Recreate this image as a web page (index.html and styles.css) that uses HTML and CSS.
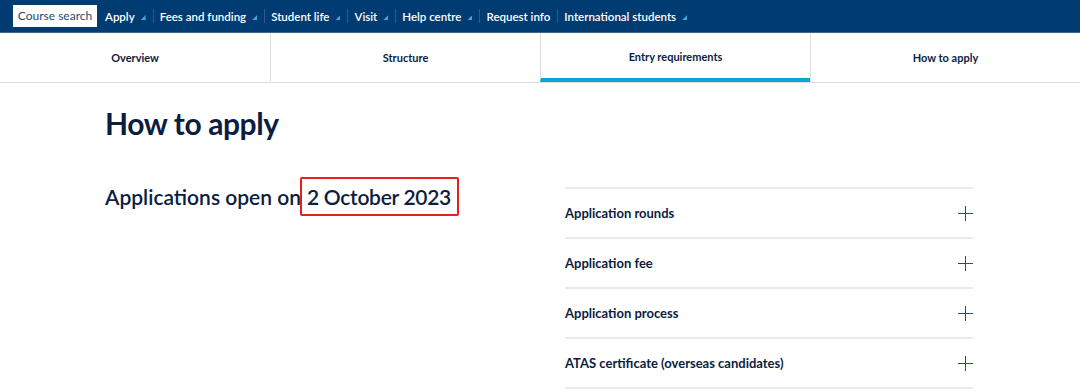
FILE: index.html
```html
<!DOCTYPE html>
<html lang="en">
<head>
<meta charset="utf-8">
<title>How to apply</title>
<link rel="stylesheet" href="styles.css">
</head>
<body>
<header class="topbar">
  <a class="search-btn" href="#">Course search</a>
  <nav class="topnav">
    <a class="item" href="#">Apply<span class="tri"></span></a>
    <span class="sep"></span>
    <a class="item" href="#">Fees and funding<span class="tri"></span></a>
    <span class="sep"></span>
    <a class="item" href="#">Student life<span class="tri"></span></a>
    <span class="sep"></span>
    <a class="item" href="#">Visit<span class="tri"></span></a>
    <span class="sep"></span>
    <a class="item" href="#">Help centre<span class="tri"></span></a>
    <span class="sep"></span>
    <a class="item" href="#">Request info</a>
    <span class="sep"></span>
    <a class="item" href="#">International students<span class="tri"></span></a>
  </nav>
</header>
<nav class="tabs">
  <a class="tab" href="#">Overview</a>
  <a class="tab" href="#">Structure</a>
  <a class="tab active" href="#">Entry requirements</a>
  <a class="tab" href="#">How to apply</a>
</nav>
<main class="content">
  <h1 class="title">How to apply</h1>
  <div class="cols">
    <div class="left">
      <h2 class="open">Applications open on<span class="date">2 October 2023</span></h2>
    </div>
    <div class="accordion">
      <div class="acc-row"><span>Application rounds</span><span class="plus"></span></div>
      <div class="acc-row"><span>Application fee</span><span class="plus"></span></div>
      <div class="acc-row"><span>Application process</span><span class="plus"></span></div>
      <div class="acc-row"><span>ATAS certificate (overseas candidates)</span><span class="plus"></span></div>
    </div>
  </div>
</main>
</body>
</html>
```
FILE: styles.css
```css
* { box-sizing: border-box; }
html, body { margin: 0; padding: 0; background: #fff; }
body {
  font-family: Lato, "Open Sans", Arial, sans-serif;
  color: #0c1d3f;
  overflow: hidden;
}
a { text-decoration: none; color: inherit; }

.topbar {
  background: #003c71;
  height: 33px;
  display: flex;
  align-items: center;
  padding-left: 13px;
  border-bottom: 1px solid #3c6590;
}
.search-btn {
  background: #fff;
  color: #2b4a6f;
  font-size: 12px;
  height: 22px;
  line-height: 22px;
  margin-right: 8px;
  width: 84px;
  text-align: center;
  white-space: nowrap;
}
.topnav {
  display: flex;
  align-items: center;
}
.item {
  color: #fff;
  font-size: 11.5px;
  font-weight: 600;
  display: flex;
  align-items: center;
  white-space: nowrap;
}
.tri {
  display: inline-block;
  width: 5px;
  height: 5px;
  margin-left: 6px;
  margin-top: 3px;
  background: #3ea6dd;
  clip-path: polygon(100% 0, 100% 100%, 0 100%);
}
.sep {
  width: 1px;
  height: 14px;
  background: #2b5a8a;
  margin: 0 6px 0 7px;
}

.tabs {
  display: grid;
  grid-template-columns: repeat(4, 1fr);
  height: 50px;
  border-bottom: 1px solid #dcdde2;
}
.tab {
  display: flex;
  align-items: center;
  justify-content: center;
  font-size: 11px;
  font-weight: 700;
  color: #0c1d3f;
  border-left: 1px solid #dcdde2;
  padding-bottom: 1px;
}
.tab:first-child { border-left: none; }
.tab.active {
  border-bottom: 4px solid #0aa5d2;
  padding-top: 3px;
}

.content {
  padding: 0 107px 0 105px;
}
.title {
  margin: 0;
  padding-top: 21px;
  font-size: 30px;
  font-weight: 700;
  line-height: 38px;
  letter-spacing: -0.4px;
}
.cols {
  display: grid;
  grid-template-columns: 460px 408px;
  margin-top: 44px;
}
.open {
  margin: 0;
  margin-top: -9px;
  font-size: 21px;
  font-weight: 600;
  line-height: 38px;
  display: flex;
  align-items: center;
  letter-spacing: 0;
}
.date {
  border: 2px solid #e3211d;
  border-radius: 2px;
  padding: 0 6px 0 5px;
  height: 39px;
  line-height: 35px;
  margin-left: -1px;
  letter-spacing: -0.3px;
}
.accordion {
  border-top: 2px solid #e8e9ec;
  margin-top: 1px;
}
.acc-row {
  height: 50px;
  border-bottom: 2px solid #e8e9ec;
  display: flex;
  align-items: center;
  justify-content: space-between;
  font-size: 13px;
  font-weight: 700;
  padding-right: 0;
}
.plus {
  width: 15px;
  height: 15px;
  position: relative;
}
.plus::before, .plus::after {
  content: "";
  position: absolute;
  background: #2f4a6b;
}
.plus::before { left: 0; right: 0; top: 7px; height: 1px; }
.plus::after { top: 0; bottom: 0; left: 7px; width: 1px; }
```
